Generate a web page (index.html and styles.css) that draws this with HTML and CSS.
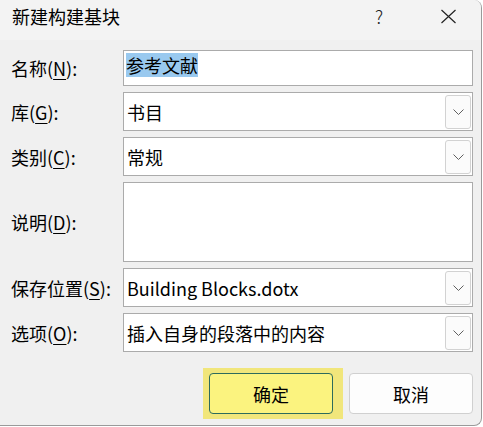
FILE: index.html
```html
<!DOCTYPE html>
<html lang="zh-CN">
<head>
<meta charset="utf-8">
<title>新建构建基块</title>
<link rel="stylesheet" href="styles.css">
</head>
<body>
<div class="dialog">
  <div class="titlebar">
    <span class="title">新建构建基块</span>
    <span class="help">?</span>
    <span class="close">
      <svg width="17" height="15" viewBox="0 0 17 15"><path d="M1.5 1 L15.5 14 M15.5 1 L1.5 14" stroke="#222" stroke-width="1.2" fill="none"/></svg>
    </span>
  </div>
  <div class="content">
    <div class="form">
      <label class="lbl">名称(<u>N</u>):</label>
      <div class="field field-top"><span class="sel">参考文献</span></div>

      <label class="lbl">库(<u>G</u>):</label>
      <div class="field"><span class="val">书目</span><span class="drop"><svg width="11" height="6" viewBox="0 0 11 6"><path d="M0.5 0.5 L5.5 5.5 L10.5 0.5" stroke="#606060" stroke-width="1" fill="none"/></svg></span></div>

      <label class="lbl">类别(<u>C</u>):</label>
      <div class="field"><span class="val">常规</span><span class="drop"><svg width="11" height="6" viewBox="0 0 11 6"><path d="M0.5 0.5 L5.5 5.5 L10.5 0.5" stroke="#606060" stroke-width="1" fill="none"/></svg></span></div>

      <label class="lbl">说明(<u>D</u>):</label>
      <div class="field area"></div>

      <label class="lbl">保存位置(<u>S</u>):</label>
      <div class="field"><span class="val latin">Building Blocks.dotx</span><span class="drop"><svg width="11" height="6" viewBox="0 0 11 6"><path d="M0.5 0.5 L5.5 5.5 L10.5 0.5" stroke="#606060" stroke-width="1" fill="none"/></svg></span></div>

      <label class="lbl">选项(<u>O</u>):</label>
      <div class="field"><span class="val">插入自身的段落中的内容</span><span class="drop"><svg width="11" height="6" viewBox="0 0 11 6"><path d="M0.5 0.5 L5.5 5.5 L10.5 0.5" stroke="#606060" stroke-width="1" fill="none"/></svg></span></div>
    </div>
    <div class="buttons">
      <span class="hl"><button class="btn btn-ok">确定</button></span>
      <button class="btn btn-cancel">取消</button>
    </div>
  </div>
</div>
</body>
</html>
```

FILE: styles.css
```css
html, body {
  margin: 0;
  padding: 0;
  background: #ffffff;
}
body {
  width: 483px;
  height: 427px;
  overflow: hidden;
  font-family: "Noto Sans CJK SC", "Noto Sans", sans-serif;
  color: #000;
}
.dialog {
  box-sizing: border-box;
  width: 482px;
  height: 426px;
  background: #f0f0f0;
  border-right: 1px solid #9a9a9a;
  border-bottom: 1px solid #9a9a9a;
  border-radius: 0 8px 8px 0;
  overflow: hidden;
}
.titlebar {
  height: 40px;
  background: #f3f3f3;
  display: flex;
  align-items: center;
  padding: 0 24px 0 12px;
  box-sizing: border-box;
}
.title {
  flex: 1;
  font-size: 18px;
  line-height: 24px;
  margin-top: -9px;
}
.help {
  width: 20px;
  text-align: center;
  font-size: 18px;
  line-height: 24px;
  font-weight: 300;
  margin-right: 51px;
  margin-top: -9px;
  color: #222;
}
.close {
  display: flex;
  width: 17px;
  height: 15px;
  margin-top: -7px;
}
.content {
  padding: 10px 0 0 11px;
}
.form {
  display: grid;
  grid-template-columns: 112px 350px;
  grid-template-rows: 36px 39px 39px 80px 39px 39px;
  row-gap: 6px;
}
.lbl {
  font-size: 18px;
  line-height: 24px;
  display: flex;
  align-items: center;
  white-space: nowrap;
}
.lbl u {
  text-decoration-thickness: 1px;
  text-underline-offset: 3px;
}
.field {
  box-sizing: border-box;
  border: 1px solid #ababab;
  background: #ffffff;
  display: flex;
  align-items: center;
  padding-left: 2px;
  font-size: 18px;
  line-height: 24px;
}
.field-top {
  align-items: flex-start;
  padding-top: 2px;
}
.sel {
  background: #99c9ef;
  line-height: 24px;
}
.val {
  flex: 1;
  padding-left: 1px;
  white-space: nowrap;
}
.area {
  align-items: flex-start;
}
.drop {
  box-sizing: border-box;
  width: 26px;
  height: 34px;
  margin-right: 1px;
  border: 1px solid #d2d2d2;
  border-radius: 3px;
  background: #fbfbfb;
  display: flex;
  align-items: center;
  justify-content: center;
}
.buttons {
  display: flex;
  justify-content: flex-end;
  align-items: flex-start;
  gap: 16px;
  width: 462px;
  margin-top: 21px;
}
.hl {
  display: flex;
  background: #f1e67b;
  padding: 5px 10px 5px 6px;
  margin: -5px -10px -5px -6px;
}
.btn {
  box-sizing: border-box;
  width: 124px;
  height: 41px;
  border-radius: 4px;
  font-family: "Noto Sans CJK SC", sans-serif;
  font-size: 18px;
  color: #000;
  padding: 0;
}
.btn-ok {
  background: #fbf37f;
  border: 1px solid #2d6b5c;
}
.btn-cancel {
  background: #fdfdfd;
  border: 1px solid #d0d0d0;
}
```
